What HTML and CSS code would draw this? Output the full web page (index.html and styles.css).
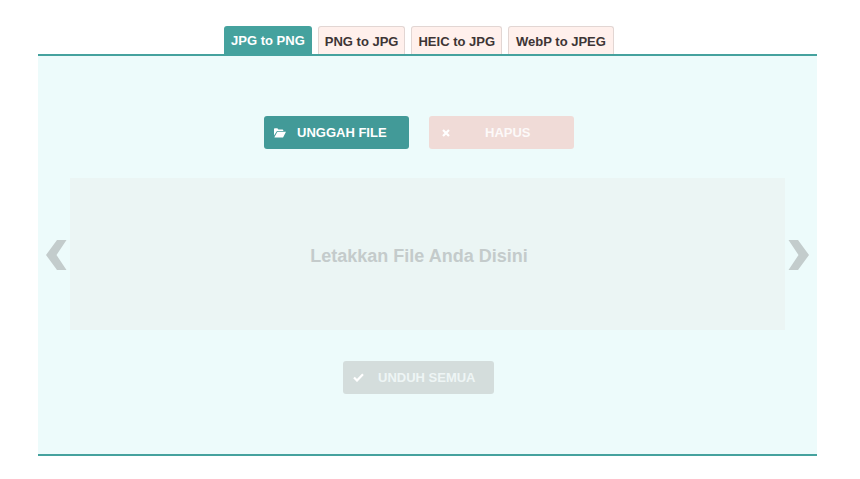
FILE: index.html
```html
<!DOCTYPE html>
<html lang="en">
<head>
    <meta charset="UTF-8">
    <meta name="viewport" content="width=device-width, initial-scale=1.0">
    <title>JPG to PNG</title>
    <link rel="stylesheet" href="styles.css">
</head>
<body>
    <nav class="tabs">
        <a href="#" class="tab active">JPG to PNG</a>
        <a href="#" class="tab">PNG to JPG</a>
        <a href="#" class="tab">HEIC to JPG</a>
        <a href="#" class="tab tab-last">WebP to JPEG</a>
    </nav>
    <main class="panel">
        <div class="actions">
            <button class="btn btn-upload">
                <svg class="icon" width="12" height="10" viewBox="0 0 12 10"><path d="M0 1.2C0 .6.4.2 1 .2h2.4l1 1.2H8.400c.5 0 .9.400.9.900V3H3L0 7.500zM3.400 3.800H12L9.200 9.300c-.1.200-.3.300-.6.300H.9c-.4 0-.6-.3-.4-.6z" fill="#fff"/></svg>
                <span class="label">UNGGAH FILE</span>
            </button>
            <button class="btn btn-clear">
                <svg class="icon" width="8" height="8" viewBox="0 0 8 8"><path d="M1 1l6 6M7 1L1 7" stroke="#fff" stroke-width="2.200" fill="none"/></svg>
                <span class="label label-wide">HAPUS</span>
            </button>
        </div>
        <div class="stage">
            <svg class="arrow" width="22" height="30" viewBox="0 0 22 30"><path d="M21.500 0H12L1 15l11 15h9.500L11.500 15z" fill="#c3cccc"/></svg>
            <div class="dropzone">Letakkan File Anda Disini</div>
            <svg class="arrow" width="22" height="30" viewBox="0 0 22 30"><path d="M.5 0H10l11 15-11 15H.5l10-15z" fill="#c3cccc"/></svg>
        </div>
        <button class="btn btn-download">
            <svg class="icon" width="11" height="9" viewBox="0 0 11 9"><path d="M1 4.500l3 3 6-6.300" stroke="#fff" stroke-width="2.200" fill="none"/></svg>
            <span class="label label-download">UNDUH SEMUA</span>
        </button>
    </main>
</body>
</html>
```

FILE: styles.css
```css
body {
    font-family: 'Liberation Sans', Arial, sans-serif;
    margin: 0;
    padding: 26px 43px 0 38px;
    background-color: #fff;
}
.tabs {
    display: flex;
    justify-content: center;
    gap: 6px;
    height: 28px;
    padding-right: 17px;
}
.tab {
    display: block;
    box-sizing: border-box;
    height: 28px;
    padding: 0 6px;
    line-height: 30px;
    font-size: 13px;
    font-weight: bold;
    color: #3d3535;
    text-decoration: none;
    background-color: #fff0ec;
    border: 1px solid #e2d6d3;
    border-bottom: none;
    border-radius: 3px 3px 0 0;
}
.tab-last {
    padding: 0 7px;
}
.tab.active {
    padding: 0 7px;
    color: #fff;
    background-color: #45a29e;
    border: none;
}
.panel {
    box-sizing: border-box;
    height: 402px;
    display: flex;
    flex-direction: column;
    align-items: center;
    padding: 60px 17px 0 0;
    background-color: #edfbfb;
    border-top: 2px solid #45a29e;
    border-bottom: 2px solid #45a29e;
}
.actions {
    display: flex;
    gap: 20px;
}
.btn {
    display: flex;
    align-items: center;
    box-sizing: border-box;
    width: 145px;
    height: 33px;
    padding: 0 10px;
    border: none;
    border-radius: 3px;
    color: #fff;
    font-family: inherit;
    font-size: 13px;
    font-weight: bold;
}
.icon {
    flex-shrink: 0;
}
.label {
    margin-left: 11px;
}
.label-wide {
    margin-left: 35px;
    opacity: 0.85;
}
.label-download {
    margin-left: 14px;
}
.btn-upload {
    background-color: #429a98;
}
.btn-clear {
    background-color: #f0dbd7;
    padding-left: 13px;
}
.stage {
    align-self: stretch;
    display: flex;
    align-items: center;
    justify-content: space-between;
    margin: 29px -17px 31px 0;
    padding: 2px 7px 0 7px;
}
.arrow {
    flex-shrink: 0;
}
.dropzone {
    box-sizing: border-box;
    width: 715px;
    height: 152px;
    margin-top: -2px;
    display: flex;
    align-items: center;
    justify-content: center;
    padding: 4px 17px 0 0;
    background-color: #ebf5f4;
    color: #c4cbcb;
    font-size: 18px;
    font-weight: bold;
}
.btn-download {
    width: 151px;
    margin-right: 1px;
    background-color: #d4dddc;
    color: #eef5f5;
}
```
